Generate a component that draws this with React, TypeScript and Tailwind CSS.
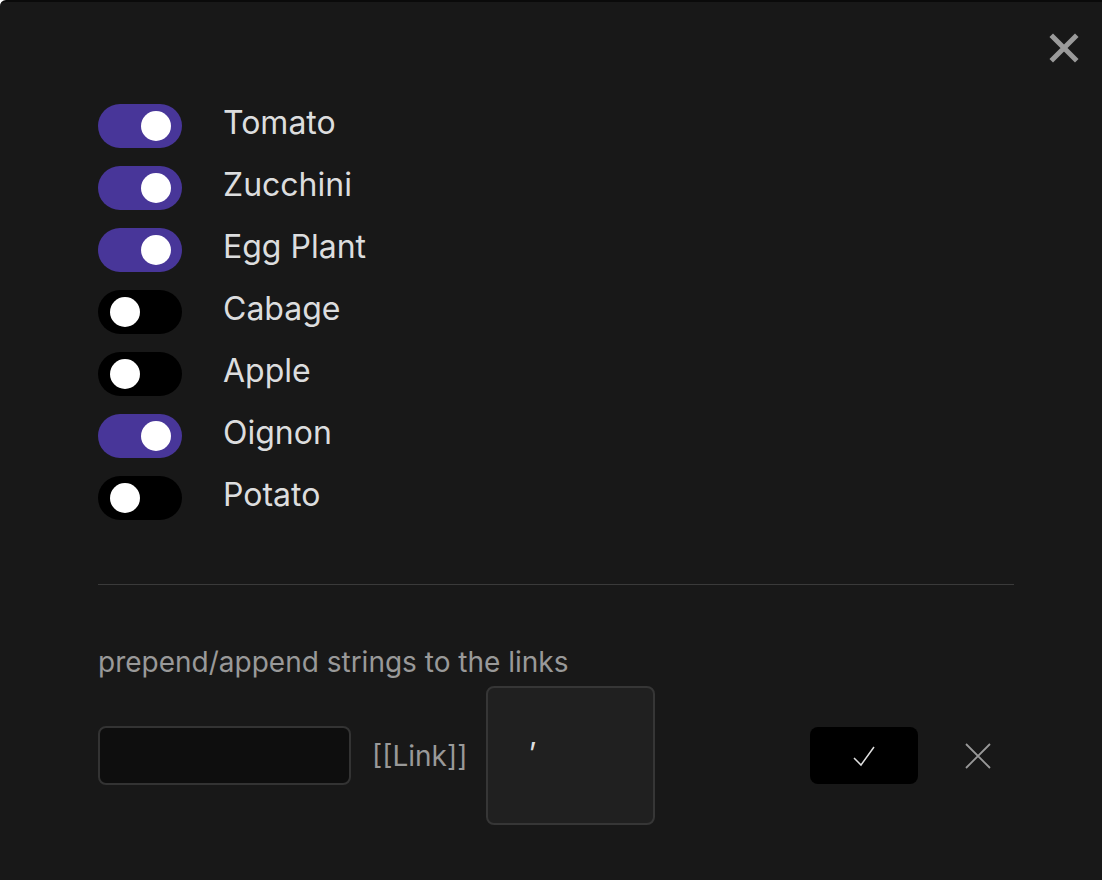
import { useState } from 'react'

const items = [
  { name: 'Tomato', on: true },
  { name: 'Zucchini', on: true },
  { name: 'Egg Plant', on: true },
  { name: 'Cabage', on: false },
  { name: 'Apple', on: false },
  { name: 'Oignon', on: true },
  { name: 'Potato', on: false },
]

function Toggle({ on, onClick }: { on: boolean; onClick: () => void }) {
  return (
    <button
      onClick={onClick}
      className={
        on
          ? 'w-[84px] h-[44px] rounded-full bg-[#483699] flex items-center justify-end pr-[11px] shrink-0'
          : 'w-[84px] h-[44px] rounded-full bg-black flex items-center justify-start pl-[12px] shrink-0'
      }
    >
      <span className="w-[30px] h-[30px] rounded-full bg-white" />
    </button>
  )
}

export default function App() {
  const [state, setState] = useState(items.map((i) => i.on))

  return (
    <div
      className="w-[1102px] h-[880px] bg-[#181818] border-t-2 border-[#0a0a0a] rounded-tl-md text-[#dcddde] relative"
      style={{ fontFamily: 'Inter, "Noto Sans", sans-serif' }}
    >
      {/* close */}
      <button className="absolute right-[22px] top-[30px] w-[32px] h-[32px] flex items-center justify-center">
        <svg width="30" height="30" viewBox="0 0 30 30">
          <path d="M4 4 L26 26 M26 4 L4 26" stroke="#9a9a9a" strokeWidth="5" strokeLinecap="square" />
        </svg>
      </button>

      <div className="pt-[102px] px-[98px]">
        <ul className="flex flex-col gap-[18px]">
          {items.map((it, i) => (
            <li key={it.name} className="flex items-center gap-[41px]">
              <Toggle
                on={state[i]}
                onClick={() => setState((s) => s.map((v, j) => (j === i ? !v : v)))}
              />
              <span className="text-[32px] leading-none -mt-[6px]">{it.name}</span>
            </li>
          ))}
        </ul>

        <div className="mt-[64px] h-px bg-[#3a3a3a] w-[916px]" />

        <p className="mt-[63px] text-[28px] leading-none text-[#999]">prepend/append strings to the links</p>

        <div className="mt-[10px] flex items-center">
          <input className="w-[253px] h-[59px] rounded-[8px] bg-[#0e0e0e] border-2 border-[#333] outline-none px-3 text-[20px] shrink-0" />
          <span className="ml-[21px] text-[28px] leading-none text-[#999]">[[Link]]</span>
          <div className="ml-[19px] w-[169px] h-[139px] rounded-[8px] bg-[#202020] border-2 border-[#363636] pl-[40px] pt-[50px] text-[30px] leading-none text-[#dcddde] shrink-0">
            ’
          </div>
          <button className="ml-[155px] w-[108px] h-[57px] rounded-[8px] bg-black flex items-center justify-center shrink-0">
            <svg width="24" height="22" viewBox="0 0 24 22">
              <path d="M2 13 L9 20 L22 2" fill="none" stroke="#e0e0e0" strokeWidth="1.5" />
            </svg>
          </button>
          <button className="ml-[47px] w-[26px] h-[26px] flex items-center justify-center shrink-0">
            <svg width="26" height="26" viewBox="0 0 26 26">
              <path d="M1 1 L25 25 M25 1 L1 25" stroke="#999" strokeWidth="1.8" />
            </svg>
          </button>
        </div>
      </div>
    </div>
  )
}
